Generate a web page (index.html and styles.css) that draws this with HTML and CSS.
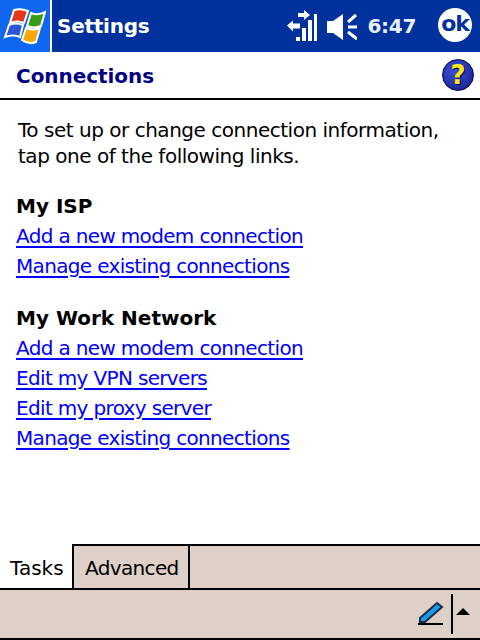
FILE: index.html
```html
<!DOCTYPE html>
<html lang="en">
<head>
<meta charset="utf-8">
<title>Settings</title>
<link rel="stylesheet" href="styles.css">
</head>
<body>
<div class="screen">
  <header class="topbar">
    <div class="start">
      <svg class="flag" width="46" height="38" viewBox="0 0 46 38">
        <path d="M14 2 Q21 0 28 3 L24 15 Q17 12 10 15Z" fill="#e4381a" stroke="#fff" stroke-width="2"/>
        <path d="M31 5 Q38 8 45 4 L41 18 Q34 21 27 18Z" fill="#3a9c14" stroke="#fff" stroke-width="2"/>
        <path d="M9 17 Q16 14 23 17 L20 29 Q13 26 5 29Z" fill="#2a55d8" stroke="#fff" stroke-width="2"/>
        <path d="M26 20 Q33 23 40 20 L36 34 Q29 37 22 32Z" fill="#f5a80e" stroke="#fff" stroke-width="2"/>
      </svg>
    </div>
    <div class="title">Settings</div>
    <div class="tray">
      <svg class="status" width="70" height="32" viewBox="288 10 70 32" fill="#fff">
        <path d="M288 25.500l6-5v3h7v5h-7v3z"/>
        <path d="M311 15l-6-5v3h-6v4h6v3z"/>
        <rect x="297" y="37" width="4" height="4"/><rect x="303" y="28" width="4" height="13"/><rect x="309" y="20" width="4" height="21"/><rect x="315" y="14" width="3" height="27"/>
        <path d="M328 21h6l10-7v26l-10-7h-6z"/>
        <path d="M357 15l-8 7M349 27h9M349 32l9 7" stroke="#fff" stroke-width="3" fill="none"/>
      </svg>
      <span class="clock">6:47</span>
      <div class="ok">ok</div>
    </div>
  </header>
  <section class="heading">
    <h1>Connections</h1>
    <div class="help">?</div>
  </section>
  <main class="content">
    <p class="intro">To set up or change connection information,<br>tap one of the following links.</p>
    <h2>My ISP</h2>
    <ul class="links">
      <li><a href="#">Add a new modem connection</a></li>
      <li><a href="#">Manage existing connections</a></li>
    </ul>
    <h2>My Work Network</h2>
    <ul class="links">
      <li><a href="#">Add a new modem connection</a></li>
      <li><a href="#">Edit my VPN servers</a></li>
      <li><a href="#">Edit my proxy server</a></li>
      <li><a href="#">Manage existing connections</a></li>
    </ul>
  </main>
  <nav class="tabs">
    <div class="tab tab-active">Tasks</div>
    <div class="tab tab-plain">Advanced</div>
    <div class="tab-rest"></div>
  </nav>
  <footer class="menubar">
    <svg class="pen" width="28" height="26" viewBox="0 0 28 26">
      <path d="M1 23h25" stroke="#000" stroke-width="2"/>
      <path d="M3 17 20 2l5 4L8 21H3z" fill="#1a9be8" stroke="#1c2a4c" stroke-width="2"/>
    </svg>
    <div class="sep"></div>
    <div class="arrow"></div>
  </footer>
</div>
</body>
</html>
```
FILE: styles.css
```css
* { box-sizing: border-box; }
html, body { margin: 0; padding: 0; }
body { background: #fff; font-family: "DejaVu Sans", Verdana, sans-serif; color: #000; }
.screen { width: 480px; height: 640px; display: flex; flex-direction: column; overflow: hidden; }

.topbar { height: 52px; background: #00319c; display: flex; align-items: stretch; color: #fff; }
.start { width: 52px; background: #0f66ef; border-right: 2px solid #fff; display: flex; align-items: center; padding-top: 2px; }
.flag { display: block; }
.title { font-size: 20px; font-weight: 700; line-height: 52px; margin-left: 5px; letter-spacing: -.25px; }
.tray { margin-left: auto; display: flex; align-items: center; padding-right: 8px; }
.status { display: block; margin-right: 10px; }
.clock { font-size: 20px; font-weight: 700; letter-spacing: -.3px; margin-right: 22px; color: #e8f0ff; }
.ok { width: 34px; height: 34px; margin-top: -2px; border-radius: 50%; background: #fff; color: #00319c; font-size: 22px; font-weight: 700; line-height: 31px; text-align: center; letter-spacing: -1.2px; }

.heading { height: 48px; border-bottom: 2px solid #000; display: flex; align-items: center; justify-content: space-between; padding: 0 6px 0 16px; }
h1 { margin: 2px 0 0; font-size: 20px; font-weight: 700; color: #000084; letter-spacing: -.05px; }
.help { width: 32px; height: 32px; border-radius: 50%; background: radial-gradient(circle at 40% 35%, #3c50d8, #101c80); border: 1px solid #000050; color: #ffe81a; font-size: 26px; font-weight: 700; line-height: 30px; text-align: center; text-shadow: 1px 1px 0 #000050; }

.content { flex: 1; padding: 17px 16px 0 17px; }
.intro { margin: 0 0 23px 1px; font-size: 20px; line-height: 26px; letter-spacing: -.48px; }
h2 { margin: 0 0 1px -1px; font-size: 20px; font-weight: 700; line-height: 28px; letter-spacing: 0; }
.links { list-style: none; margin: 0 0 23px -1px; padding: 0; }
.links li { height: 30px; font-size: 20px; line-height: 30px; letter-spacing: -.66px; }
.links a { color: #0000ff; text-decoration: underline; text-decoration-thickness: 2px; text-underline-offset: 3px; }

.tabs { height: 46px; display: flex; border-bottom: 2px solid #000; background: #decfc7; }
.tab { font-size: 20px; border-right: 2px solid #000; }
.tab-active { width: 74px; padding-left: 10px; background: #fff; line-height: 48px; letter-spacing: 0; white-space: nowrap; }
.tab-plain { width: 116px; padding-left: 11px; border-top: 2px solid #000; line-height: 44px; letter-spacing: -.65px; white-space: nowrap; }
.tab-rest { flex: 1; border-top: 2px solid #000; }

.menubar { height: 50px; background: #decfc7; border-bottom: 2px solid #000; display: flex; align-items: center; justify-content: flex-end; padding-right: 10px; }
.pen { margin-right: 6px; display: block; }
.sep { width: 2px; height: 40px; background: #000; margin-right: 3px; }
.arrow { width: 0; height: 0; margin-bottom: 6px; border-left: 7px solid transparent; border-right: 7px solid transparent; border-bottom: 7px solid #000; }
```
